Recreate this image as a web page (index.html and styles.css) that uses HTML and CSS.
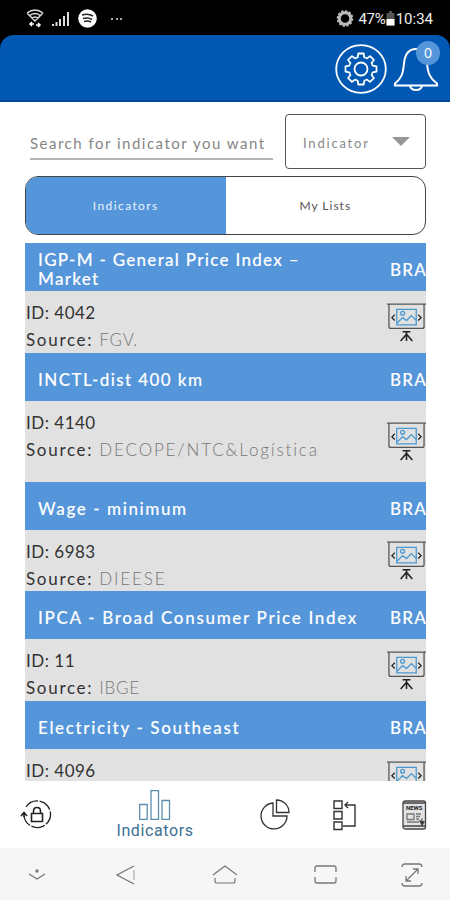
FILE: index.html
```html
<!DOCTYPE html>
<html lang="en">
<head>
  <meta charset="UTF-8">
  <meta name="viewport" content="width=device-width, initial-scale=1.0">
  <title>Indicators</title>
  <link rel="stylesheet" href="styles.css">
</head>
<body>
  <svg class="sprite">
    <symbol id="board" viewBox="0 0 40 40">
      <g fill="none" stroke="#555" stroke-width="1.3">
        <path d="M0 1.200h40M2 1v23q0 2 2 2h32q2 0 2-2V1" />
        <path d="M8 12l-3 3 3 3M32 12l3 3-3 3" stroke="#222" />
        <path d="M16 29.500h8M20 29.500v9.500M20 32l-6 7M20 32l6 7" stroke="#222" stroke-width="1.600" />
        <path d="M10 6.500h20v16H10zM10 21l6-6 4 3 5-5 5 5" stroke="#4a98d0" />
        <circle cx="16" cy="10.500" r="2" stroke="#4a98d0" />
      </g>
    </symbol>
  </svg>

  <div class="status-bar">
    <div class="status-left">
      <svg width="18" height="19" viewBox="0 0 18 19" fill="none" stroke="#ddd" stroke-width="1.500">
        <path d="M1 4q8-6 16 0M3 7q6-5 12 0M6 9.500q3-3 6 0M1 4l8 8 8-8" />
        <path d="M4 15h4M6 13l-2 2 2 2M10 16h4M12 14l2 2-2 2" stroke="#fff" />
      </svg>
      <svg width="18" height="16" viewBox="0 0 18 16" fill="#ddd">
        <path d="M0 13h2v2H0zM3.500 11h2v4h-2zM7 8h2v7H7zM11 5h2v10h-2zM15 1h2v14h-2z" />
      </svg>
      <svg width="19" height="19" viewBox="0 0 19 19" fill="none">
        <circle cx="9.500" cy="9.500" r="9.300" fill="#fff" />
        <path d="M4 6q6-2 11 1M5 9.500q5-1.500 9 1M6 12.500q4-1 7 .5" stroke="#222" stroke-width="1.500" />
      </svg>
      <span class="dots"></span>
    </div>
    <div class="status-right">
      <svg width="18" height="17" viewBox="0 0 18 17" fill="none" stroke="#bbb">
        <circle cx="9" cy="8.500" r="5.800" stroke-width="3" />
        <circle cx="9" cy="8.500" r="7.500" stroke-width="1.600" stroke-dasharray="2.400 1.500" />
      </svg>
      <span class="percent">47%</span>
      <svg width="9" height="15" viewBox="0 0 9 15">
        <path d="M3 0h3v2h2.500v12.500h-8V2H3z" fill="#555" />
        <path d="M.5 8h8v6.500h-8z" fill="#fff" />
      </svg>
      <span class="time">10:34</span>
    </div>
  </div>

  <header class="app-header">
    <svg width="52" height="50" viewBox="-26 -25 52 50" fill="none" stroke="#fff" stroke-width="1.800">
      <ellipse rx="24.800" ry="23.800" />
      <circle r="6.500" />
      <path id="tooth" d="M-4.600-11.100L-3.300-11.700-2.700-15.500H2.700L3.300-11.700 4.600-11.100" stroke-linejoin="round" />
      <use href="#tooth" transform="rotate(45)" />
      <use href="#tooth" transform="rotate(90)" />
      <use href="#tooth" transform="rotate(135)" />
      <use href="#tooth" transform="rotate(180)" />
      <use href="#tooth" transform="rotate(225)" />
      <use href="#tooth" transform="rotate(270)" />
      <use href="#tooth" transform="rotate(315)" />
    </svg>
    <div class="bell">
      <svg width="46" height="50" viewBox="0 0 46 50" fill="none" stroke="#fff" stroke-width="2">
        <path d="M2 41.500h42v-2c-7-5-9-10-10-20C33 9 30 5 23 5S12 9 11 19.500C10 29 9 34 2 39.500zM17 42q1 4 6 4t6-4" />
      </svg>
      <span class="badge">0</span>
    </div>
  </header>

  <main class="content">
    <div class="search-row">
      <div class="search"><span>Search for indicator you want</span></div>
      <div class="select"><span>Indicator</span><i class="arrow"></i></div>
    </div>

    <div class="tabs">
      <div class="tab active"><span>Indicators</span></div>
      <div class="tab"><span>My Lists</span></div>
    </div>

    <div class="list">
      <div class="item-title"><span class="name n1">IGP-M - General Price Index –<br>Market</span><span class="country">BRA</span></div>
      <div class="item-body">
        <div class="details"><div class="id">ID: 4042</div><div class="source">Source: <span>FGV.</span></div></div>
        <svg class="board"><use href="#board" /></svg>
      </div>
      <div class="item-title"><span class="name n2">INCTL-dist 400 km</span><span class="country">BRA</span></div>
      <div class="item-body tall">
        <div class="details"><div class="id">ID: 4140</div><div class="source">Source: <span class="wide">DECOPE/NTC&amp;Logística</span></div></div>
        <svg class="board"><use href="#board" /></svg>
      </div>
      <div class="item-title"><span class="name n3">Wage - minimum</span><span class="country">BRA</span></div>
      <div class="item-body short">
        <div class="details"><div class="id">ID: 6983</div><div class="source">Source: <span class="wide">DIEESE</span></div></div>
        <svg class="board"><use href="#board" /></svg>
      </div>
      <div class="item-title"><span class="name n4">IPCA - Broad Consumer Price Index</span><span class="country">BRA</span></div>
      <div class="item-body">
        <div class="details"><div class="id">ID: 11</div><div class="source">Source: <span>IBGE</span></div></div>
        <svg class="board"><use href="#board" /></svg>
      </div>
      <div class="item-title"><span class="name n5">Electricity - Southeast</span><span class="country">BRA</span></div>
      <div class="item-body">
        <div class="details"><div class="id">ID: 4096</div></div>
        <svg class="board"><use href="#board" /></svg>
      </div>
    </div>
  </main>

  <nav class="tab-bar">
    <div class="nav-item nav-lock">
      <svg width="32" height="30" viewBox="0 0 32 30" fill="none" stroke="#222" stroke-width="1.300">
        <path d="M6 7A13.300 13.300 0 1 1 4 16" stroke-dasharray="14 1.500" />
        <path d="M1 16l3-3.500L7 16M4 13v4" stroke-width="1.600" />
        <path d="M11.500 13.500h11v8h-11zM13.500 13V11q0-3.500 3.500-3.500t3.500 3.500v2" stroke-width="1.600" />
      </svg>
    </div>
    <div class="nav-item nav-indicators">
      <svg width="32" height="30" viewBox="0 0 32 30" fill="none" stroke="#5b8ead" stroke-width="1.300">
        <path d="M.7 14.500h7.500v14.800H.7zM12 .7h7.500v28.600H12zM23 10.500h7.500v18.800H23z" />
      </svg>
      <span>Indicators</span>
    </div>
    <div class="nav-item nav-pie">
      <svg width="32" height="31" viewBox="0 0 32 31" fill="none" stroke="#333" stroke-width="1.300">
        <path d="M14 4A13 13 0 1 0 28 17H14z" />
        <path d="M17.500 1v12.500H30A12.500 12.500 0 0 0 17.500 1z" />
      </svg>
    </div>
    <div class="nav-item nav-flow">
      <svg width="24" height="31" viewBox="0 0 24 31" fill="none" stroke="#333" stroke-width="1.400">
        <path d="M1 1h8v7.500H1zM1 11.500h8V19H1zM1 22h8v7.500H1zM10 26h12V5H12M15 2l-3 3 3 3" />
      </svg>
    </div>
    <div class="nav-item nav-news">
      <svg width="25" height="30" viewBox="0 0 25 30" fill="none" stroke="#444" stroke-width="1.300">
        <rect x="1" y="1" width="22.500" height="28" rx="2" fill="#e3e3e3" />
        <path d="M1 3h22M1 26h22" />
        <path d="M5 14h7v5.500H5zM14 14h5M14 16.500h4M14 19h3M5 22h12M20 18v5" stroke="#777" />
        <path d="M18 21l2 4 2-3z" fill="#222" />
        <text x="12.300" y="10" class="news">NEWS</text>
      </svg>
    </div>
  </nav>

  <div class="system-bar">
    <svg width="18" height="13" viewBox="0 0 18 13" fill="none" stroke="#777" stroke-width="1.300"><path d="M1 6l8 5 8-5" /><circle cx="9" cy="3" r="1" fill="#444" /></svg>
    <svg class="back" width="20" height="22" viewBox="0 0 20 22" fill="none" stroke="#777" stroke-width="1.200"><path d="M18 2L1 11l17 9" /><path d="M18 6v10" stroke="#aaa" /></svg>
    <svg class="home" width="26" height="20" viewBox="0 0 26 20" fill="none" stroke="#777" stroke-width="1.200"><path d="M1 10l12-9 12 9M3 13v3q0 2 2 2h16q2 0 2-2v-3" /></svg>
    <svg class="recent" width="23" height="19" viewBox="0 0 23 19" fill="none" stroke="#777" stroke-width="1.300"><path d="M1 7V3q0-2 2-2h17q2 0 2 2v4M1 12v4q0 2 2 2h17q2 0 2-2v-4" /></svg>
    <svg class="expand" width="22" height="24" viewBox="0 0 22 24" fill="none" stroke="#777" stroke-width="1.300"><path d="M1 4q0-3 3-3h14q3 0 3 3M1 20q0 3 3 3h14q3 0 3-3M5 18L17 6M12 6h5v5M5 13v5h5" /></svg>
  </div>
</body>
</html>
```
FILE: styles.css
```css
* {
  box-sizing: border-box;
}
body {
  margin: 0;
  width: 450px;
  height: 900px;
  overflow: hidden;
  display: flex;
  flex-direction: column;
  background: #000;
  font-family: Lato, sans-serif;
}
svg {
  display: block;
  flex: none;
}
span {
  white-space: nowrap;
}
.sprite {
  position: absolute;
  width: 0;
  height: 0;
}
.status-bar {
  height: 35px;
  flex: none;
  display: flex;
  justify-content: space-between;
  padding: 2px 17px 0 26px;
  color: #eee;
  font: 15px/34px Roboto, sans-serif;
}
.status-left,
.status-right {
  display: flex;
  align-items: center;
}
.status-left {
  gap: 8px;
}
.dots {
  width: 11px;
  margin-left: 6px;
  border-top: 2px dotted #aaa;
}
.status-right svg:first-child {
  margin-right: 4px;
}
.percent {
  letter-spacing: -0.2px;
}
.time {
  margin-left: 1px;
}
.app-header {
  height: 67px;
  flex: none;
  display: flex;
  justify-content: flex-end;
  align-items: flex-start;
  gap: 6px;
  padding: 9px 11px 0 0;
  background: #0058b2;
  border-bottom: 2px solid #00479b;
  border-radius: 14px 14px 0 0;
}
.bell {
  position: relative;
}
.badge {
  position: absolute;
  top: -3px;
  right: -1px;
  width: 24px;
  height: 24px;
  border-radius: 50%;
  background: #5596da;
  color: #fff;
  font-size: 13px;
  line-height: 24px;
  text-align: center;
}
.content {
  height: 679px;
  flex: none;
  padding: 12px 24px 0 25px;
  background: #fff;
  overflow: hidden;
}
.search-row {
  display: flex;
  justify-content: space-between;
  height: 55px;
}
.search {
  width: 243px;
  height: 46px;
  margin-left: 5px;
  border-bottom: 2px solid #b3b3b3;
  color: #858585;
  font-size: 15px;
  line-height: 58px;
  letter-spacing: 1.5px;
}
.select {
  display: flex;
  justify-content: space-between;
  align-items: center;
  width: 141px;
  padding: 3px 15px 0 17px;
  border: 1px solid #555;
  border-radius: 4px;
  color: #888;
  font-size: 13px;
  letter-spacing: 1.8px;
}
.arrow {
  margin-bottom: 4px;
  border: 9px solid transparent;
  border-top-color: #969696;
  border-bottom: 0;
}
.tabs {
  display: flex;
  height: 59px;
  margin: 7px 0 8px;
  border: 1px solid #444;
  border-radius: 13px;
  overflow: hidden;
}
.tab {
  flex: 1;
  color: #555;
  font-size: 12px;
  line-height: 57px;
  text-align: center;
  letter-spacing: 1px;
}
.tab.active {
  background: #5596da;
  color: #e6f4ff;
  letter-spacing: 1.4px;
}
.list {
  height: 538px;
  overflow: hidden;
}
.item-title {
  display: flex;
  justify-content: space-between;
  align-items: center;
  height: 48px;
  padding: 4px 0 0 13px;
  background: #5596da;
  color: #fff;
  font-size: 17px;
  font-weight: 500;
  line-height: 19px;
  -webkit-text-stroke: 0.1px #fff;
}
.n1 {
  letter-spacing: 1.3px;
}
.n2 {
  letter-spacing: 1.42px;
}
.n3 {
  letter-spacing: 1.6px;
}
.n4 {
  letter-spacing: 1.68px;
}
.n5 {
  letter-spacing: 1.65px;
}
.country {
  width: 36px;
  letter-spacing: 1.3px;
  overflow: hidden;
}
.item-body {
  display: flex;
  justify-content: space-between;
  align-items: center;
  height: 62px;
  background: #e1e1e1;
}
.item-body.tall {
  height: 81px;
}
.item-body.short {
  height: 61px;
}
.details {
  align-self: flex-start;
  padding-top: 8px;
  padding-left: 1px;
  color: #333;
  font-size: 17px;
  line-height: 27px;
}
.id {
  letter-spacing: 0.5px;
}
.source {
  letter-spacing: 1.7px;
}
.source span {
  color: #777;
  font-weight: 300;
  letter-spacing: 0.8px;
}
.source .wide {
  letter-spacing: 1.85px;
}
.board {
  width: 39px;
  height: 39px;
}
.tab-bar {
  display: flex;
  height: 67px;
  flex: none;
  padding: 0 21px 0 20px;
  background: #fff;
}
.nav-lock {
  width: 96px;
  padding-top: 19px;
}
.nav-indicators {
  display: flex;
  flex-direction: column;
  align-items: center;
  width: 78px;
  padding-top: 9px;
  color: #3c7094;
  font: 16px/21px Roboto, sans-serif;
  letter-spacing: 0.6px;
}
.nav-pie {
  margin-left: 65px;
  padding-top: 18px;
}
.nav-flow {
  margin-left: 42px;
  padding-top: 19px;
}
.nav-news {
  margin-left: 45px;
  padding-top: 19px;
}
.news {
  fill: #222;
  stroke: none;
  font: bold 6px Roboto, sans-serif;
  text-anchor: middle;
}
.system-bar {
  display: flex;
  align-items: center;
  height: 52px;
  flex: none;
  padding: 1px 28px 0;
  background: #f6f6f6;
}
.back {
  margin-left: 70px;
}
.home {
  margin-left: 76px;
}
.recent {
  margin-left: 76px;
}
.expand {
  margin-left: 64px;
}
```
